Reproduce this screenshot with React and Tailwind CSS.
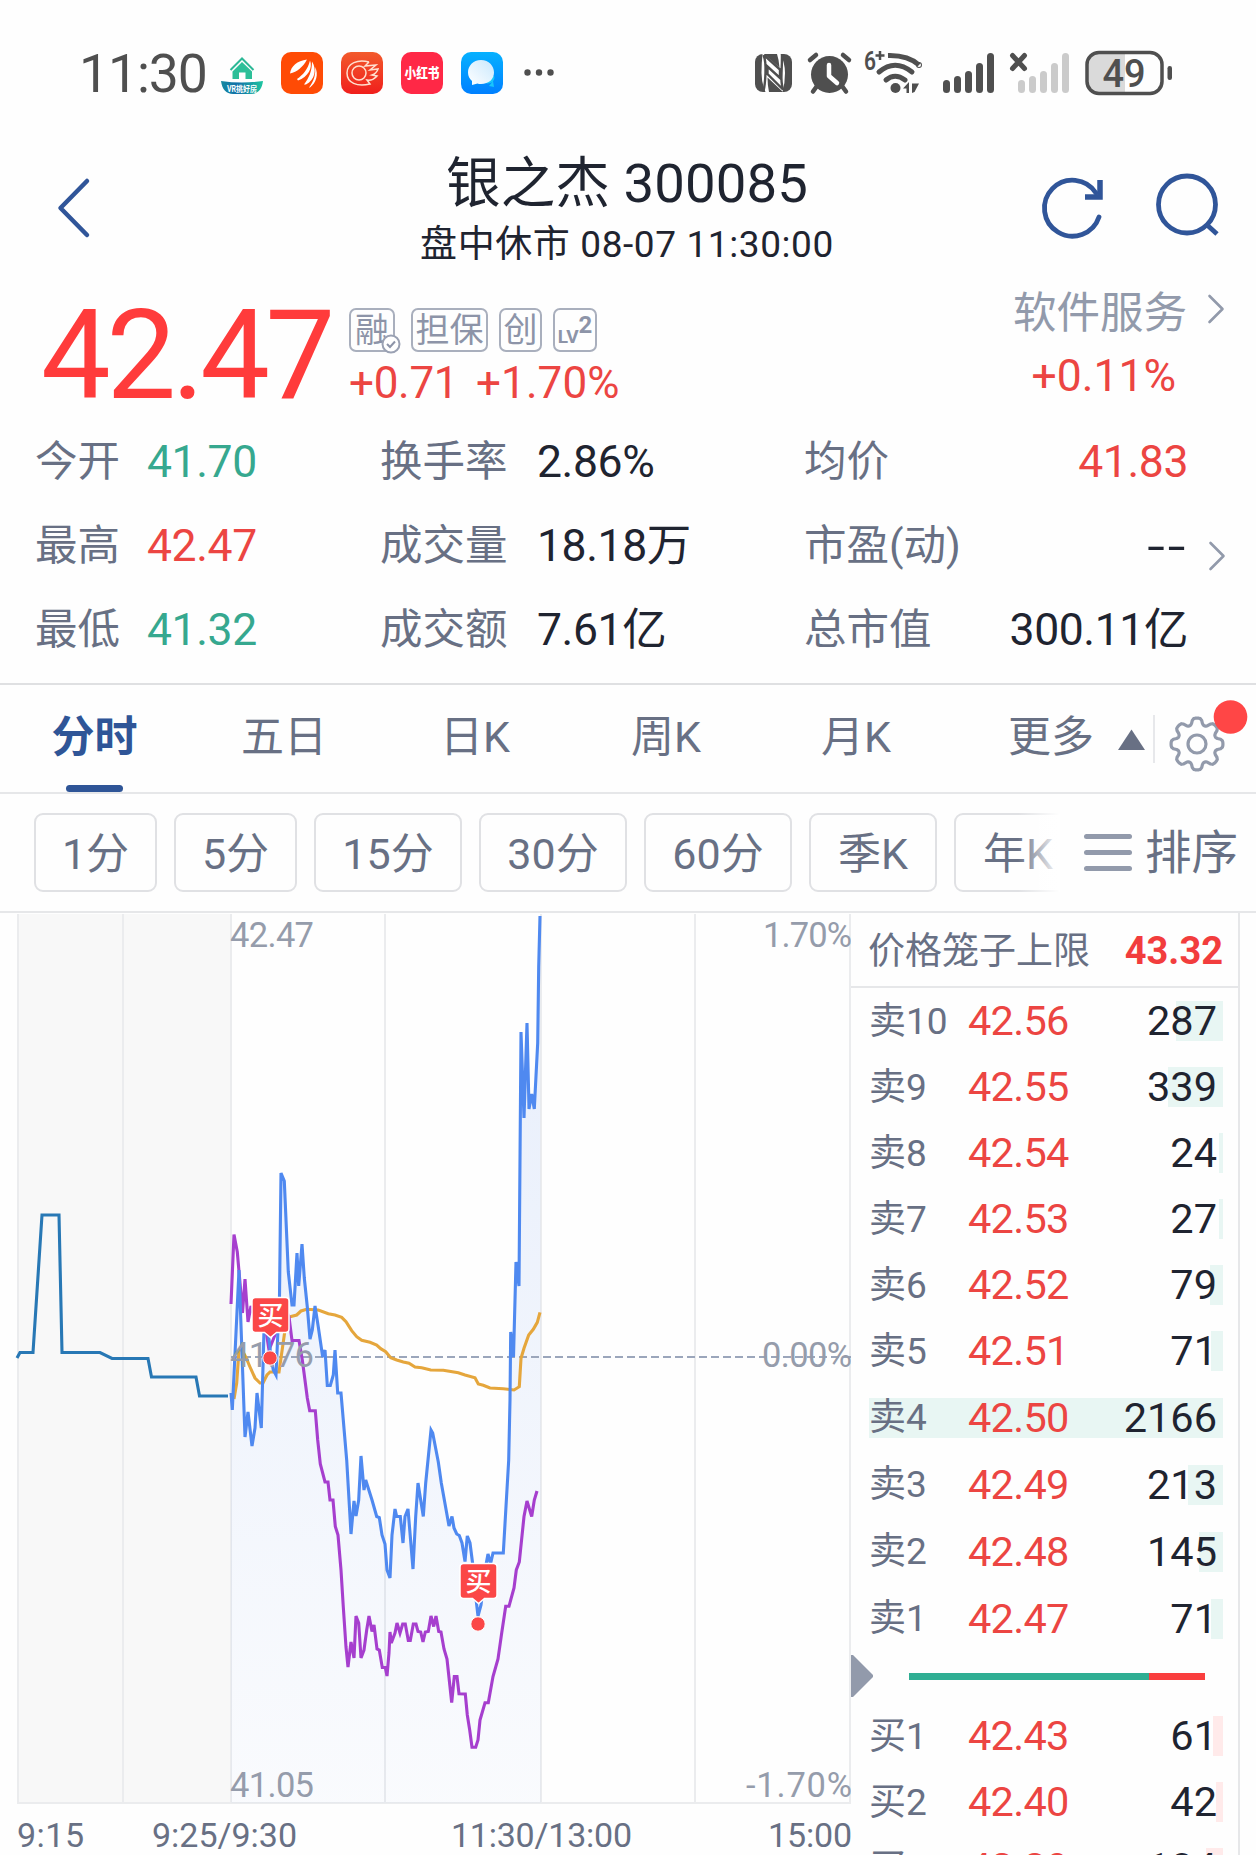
import { ChevronRight } from "lucide-react";

const LATIN = "font-['Roboto','Noto_Sans_CJK_SC',sans-serif]";

const STATS = [
    { label: '今开', value: '41.70', color: 'text-[#36a88f]' },
    { label: '换手率', value: '2.86%', color: 'text-[#1f2430]' },
    { label: '均价', value: '41.83', color: 'text-[#ec4542]' },
    { label: '最高', value: '42.47', color: 'text-[#ec4542]' },
    { label: '成交量', value: '18.18万', color: 'text-[#1f2430]' },
    { label: '市盈(动)', value: '--', color: 'text-[#1f2430] inline-block origin-right scale-x-[1.45] tracking-[2px] -mr-[3px]', more: true },
    { label: '最低', value: '41.32', color: 'text-[#36a88f]' },
    { label: '成交额', value: '7.61亿', color: 'text-[#1f2430]' },
    { label: '总市值', value: '300.11亿', color: 'text-[#1f2430]' },
];

const PERIODS = [
    { label: '1分', width: 'w-[123px]' },
    { label: '5分', width: 'w-[123px]' },
    { label: '15分', width: 'w-[148px]' },
    { label: '30分', width: 'w-[148px]' },
    { label: '60分', width: 'w-[148px]' },
    { label: '季K', width: 'w-[128px]' },
    { label: '年K', width: 'w-[128px]' },
];

const ASKS = [
    { label: '卖10', price: '42.56', amount: 287, bar: 47 },
    { label: '卖9', price: '42.55', amount: 339, bar: 55 },
    { label: '卖8', price: '42.54', amount: 24, bar: 4 },
    { label: '卖7', price: '42.53', amount: 27, bar: 4 },
    { label: '卖6', price: '42.52', amount: 79, bar: 13 },
    { label: '卖5', price: '42.51', amount: 71, bar: 12 },
    { label: '卖4', price: '42.50', amount: 2166, bar: 354, tall: true },
    { label: '卖3', price: '42.49', amount: 213, bar: 35, tall: true },
    { label: '卖2', price: '42.48', amount: 145, bar: 24, tall: true },
    { label: '卖1', price: '42.47', amount: 71, bar: 12, tall: true },
];

const BIDS = [
    { label: '买1', price: '42.43', amount: 61, bar: 10 },
    { label: '买2', price: '42.40', amount: 42, bar: 7 },
    { label: '买3', price: '42.39', amount: 104, bar: 17 },
];

const AUCTION = "17,1358 20,1352.5 33,1352.5 42,1215 59,1215 62,1352.5 100,1352.5 112,1358.5 148,1358.5 151.5,1377 196,1377 199.5,1396 228,1396";

const PRICE = "231,1393 232.3,1410 239,1270 245,1437 248,1412 252,1446 255,1428 257,1393 261.3,1428 264,1330 268,1330 271,1357 273.3,1370 276,1375 279.5,1296 281,1173 284.3,1181 288.3,1272 292,1305 294,1305 297,1253 298.7,1286 302,1244 304.3,1278 307.3,1307 310,1339 312.3,1330 315,1306 318.3,1327 322.7,1357 325,1350 327.3,1385.5 330.3,1385.5 333.3,1375 335,1350 337.7,1393 341,1393 346.7,1460 351,1534 354,1501 356,1516 358.7,1500 361,1456 364,1490 365.7,1480 372,1500 376.7,1516.5 379.3,1517.5 382,1535 385,1544 387,1570 390,1578 392,1535 395,1509 396.7,1516.5 400.3,1516.5 403,1543 405,1516.5 408,1509 413,1569 415.7,1516.5 418,1483 423.3,1516.5 425.7,1483 431,1430 432.7,1433 438.3,1462 441.3,1483 449,1526 452,1516.5 454,1528 456.7,1534 459.3,1535.5 462,1543 465,1561.5 467.3,1536 470,1543 472.7,1564 475,1590 478,1616 481,1605 485,1570 488,1554 490.5,1564 493,1553 503.3,1553 508.7,1460 510,1400 510.7,1332 513.5,1357 516,1262 519,1286 521,1032 524,1118 527,1023 529,1109 531.7,1094 534.3,1109 537.7,1043 538.7,967 540,916";

const INDEX = "231,1304 234,1234.5 237.3,1252 240,1283 242.5,1313 245,1279 248,1322 251,1306 256,1322 261,1318 266.5,1334 269,1350 275,1335 281,1320 286,1310 289,1317 292,1340.5 299,1340.5 302.3,1360 304.3,1375 307.3,1398 309.7,1410.7 315.3,1410.7 317.7,1440 320.3,1464 325,1482 328,1482 330,1500 333,1500 335.3,1526.5 338,1535 341,1570 343.3,1607 346,1647 348,1667 351,1642 354,1658 356,1616 358.7,1623 361,1658 364,1650 366.7,1630 369,1616 372,1631.5 374,1625 377,1649 379.3,1650 382.3,1667.5 385.3,1667.5 387,1676 389,1653 390,1632 391.3,1643 395,1633 397,1623 400,1633 402.7,1624 405.3,1624 408.3,1640.5 410.3,1640.5 413.3,1624 416,1624 418,1631.5 420.7,1632 423,1642 425.3,1632 428.3,1631.5 431,1616 433.7,1626.5 436,1616 438.7,1631.5 441,1632 444,1649 447,1659 451.7,1702.5 454.3,1676.5 457,1676.5 459,1693.7 465.3,1694 467.3,1715 469.7,1730 472,1747.3 475.7,1747.3 478,1740 480,1720 485,1702.7 488.3,1702.7 493,1676.5 498,1659 501.7,1633 505.7,1606.3 509,1606.3 514,1588 516.3,1570 519.3,1562 524,1516.5 527,1501 531.7,1516.5 534.3,1500 537,1491";

const AVERAGE = "234,1399 236.7,1383 239,1350 242,1350 245.7,1357 250,1367 255,1378 260,1383 263,1383 267,1375 270,1372 279,1372 285,1330 289,1317 296.7,1315 301,1311 306.7,1309.3 318.3,1310 328.3,1313.7 335,1315 341.7,1317.3 346,1321.7 351.7,1330.7 356.7,1336.7 361.7,1340.3 370,1342.3 376.7,1345 380.7,1348.7 385.7,1351.7 390.7,1357.7 396.7,1360 403.3,1362 409,1363.3 415,1367 421.7,1367.7 430.7,1370 443.3,1370.3 458.3,1372.7 465,1375 475,1377.7 478.3,1384 483.3,1385.3 490,1388 503.3,1388.7 514,1390 519.3,1386.7 521,1358.3 524,1348.3 528.7,1335 533.3,1329.3 537.3,1322.3 540,1312.3";

// eight rounded teeth around a 23px circle
const GEAR = Array.from({ length: 96 }, (_, i) => {
    const a = (i / 96) * Math.PI * 2;
    const wave = Math.tanh(1.8 * (Math.cos(8 * a) + 0.25));
    const r = 22.6 + 3.4 * wave;
    return `${(r * Math.sin(a)).toFixed(2)},${(-r * Math.cos(a)).toFixed(2)}`;
}).join(' ');

function StatusBar() {
    return (
        <div className="flex h-[120px] items-center pt-[25px] pl-[79px] text-[#4f4f4f]">
            <span className="w-[142px] pt-[3px] text-[53.5px] leading-none font-normal tracking-[-1.1px]">11:30</span>
            <svg className="h-[42px] w-[345px] shrink-0" viewBox="0 0 345 42">
                <defs>
                    <linearGradient id="boat" x1="0" x2="1" y1="0" y2="0">
                        <stop offset="0" stopColor="#1689a0" />
                        <stop offset=".4" stopColor="#1270a8" />
                        <stop offset="1" stopColor="#1fc6a0" />
                    </linearGradient>
                    <linearGradient id="coal" x1="0" x2="0" y1="0" y2="1">
                        <stop offset="0" stopColor="#f25a2c" />
                        <stop offset="1" stopColor="#f01f1c" />
                    </linearGradient>
                    <linearGradient id="chat" x1="0" x2="0" y1="0" y2="1">
                        <stop offset="0" stopColor="#06b1ff" />
                        <stop offset="1" stopColor="#0080ff" />
                    </linearGradient>
                    <linearGradient id="bubble" x1="0" x2="1" y1="1" y2="0">
                        <stop offset="0" stopColor="#ffffff" />
                        <stop offset="1" stopColor="#c9e8fd" />
                    </linearGradient>
                </defs>
                {/* house */}
                <path d="M9.500 18 21 6.500 32.500 18" fill="none" stroke="#2cb896" strokeWidth="2" />
                <path d="M21 10 31 19.500V27H24.500V20.500H18V27H11.500V19.500Z" fill="#2cbf98" />
                <path d="M0 29Q21 32 42 29C41 37 37 42 30 42H12C5 42 1 37 0 29Z" fill="url(#boat)" />
                <text x="21" y="39.500" textAnchor="middle" fontSize="8.500" fontWeight="700" fill="#fff" textLength="30" lengthAdjust="spacingAndGlyphs">VR挑好房</text>
                {/* brokerage */}
                <rect x="60" width="42" height="42" rx="10" fill="#ff4b05" />
                <path d="M69 21.500C70 14 76 9 86 7.500C82 15 76 20 69 21.500Z" fill="#fff" />
                <path d="M76 27C82 23 87 17 89 8.500C92 16 87 25 77 28.500ZM83 32.500C88 26 91 19 91 9.500C96 17 94 28 85 32.500ZM88 35.500C93 29 95 22 94 15C98 22 95 31 89 35.500Z" fill="#fff" />
                {/* comet */}
                <rect x="120" width="42" height="42" rx="10" fill="url(#coal)" />
                <g fill="none" stroke="#ffe0cf" strokeWidth="1.500">
                    <circle cx="138" cy="21" r="7" />
                    <path d="M148 10C137 7 126 11 126 21S136 35 149 32L146 28C152 29 154 26 156 24L151 23C154 22 156 20 157 17L149 18L155 13L144 14L148 10" />
                </g>
                {/* little red book */}
                <rect x="180" width="42" height="42" rx="10" fill="#ff2846" />
                <text x="201" y="26" textAnchor="middle" fontSize="14" fontWeight="900" fill="#fff" textLength="35" lengthAdjust="spacingAndGlyphs">小红书</text>
                {/* chat */}
                <rect x="240" width="42" height="42" rx="10" fill="url(#chat)" />
                <path d="M264 31C270 33 275 28 273 24L264 24ZM268 34 273 35 272 29Z" fill="#19c6fb" />
                <path d="M260 8C268 8 273 14 273 20.500S268 32 260 32C258.500 32 257.500 32 256.500 31.500L251 33V29C248.500 27 247 24 247 20.500C247 14 252 8 260 8Z" fill="url(#bubble)" />
                <circle cx="306.500" cy="20.500" r="3.200" fill="#4f4f4f" />
                <circle cx="318" cy="20.500" r="3.200" fill="#4f4f4f" />
                <circle cx="329.500" cy="20.500" r="3.200" fill="#4f4f4f" />
            </svg>
            <svg className="ml-[184px] h-[50px] w-[430px] shrink-0" viewBox="750 47 430 50">
                {/* nfc */}
                <rect x="755" y="53" width="37" height="38" rx="8" fill="#4f4f4f" />
                <path d="M762.500 53H764L779.500 66.500Q779 59 777 53H780.500Q785 62 785 72T782.500 91H783L767.500 76.500Q767.500 84 769 91H765.500Q761.500 82 761.500 72T762.500 53Z" fill="#fff" />
                <path d="M763.500 54Q766 60 765.500 72T763.500 90M764 54 780 68.500V77L767.500 65.500V73L783 88.500Q781 82 781.500 72T782 54" fill="none" stroke="#4f4f4f" strokeWidth="2.400" />
                {/* alarm */}
                <circle cx="829.500" cy="73.500" r="18.500" fill="#4f4f4f" />
                <path d="M810 59 816 54M849 59 843 54M817 85 813 90.500M842 85 846 90.500" stroke="#4f4f4f" strokeWidth="4.500" strokeLinecap="round" />
                <path d="M829 64V75L837 82" fill="none" stroke="#fff" strokeWidth="4.500" strokeLinecap="round" strokeLinejoin="round" />
                {/* wifi */}
                <text x="864" y="69" fontSize="25" fontWeight="600" fill="#4f4f4f" textLength="12" lengthAdjust="spacingAndGlyphs">6</text>
                <path d="M880 50V59M875.500 54.500H884.500" stroke="#4f4f4f" strokeWidth="2.500" />
                <g fill="none" stroke="#4f4f4f" strokeWidth="5">
                    <path d="M888 54.500Q908 54 919 64" />
                    <circle cx="919" cy="64" r=".5" />
                    <path d="M879 71Q895 57.500 912 71" strokeLinecap="round" />
                    <path d="M886 79Q895 71.500 905 79" strokeLinecap="round" />
                </g>
                <circle cx="895.500" cy="87" r="5" fill="#4f4f4f" />
                <path d="M903 87.500 909 81V92H906.500V87.500ZM912 92V82.500H919L914.500 91Z" fill="#4f4f4f" />
                {/* signal */}
                <g fill="#4f4f4f">
                    <rect x="943" y="79" width="7" height="13" rx="3.500" />
                    <rect x="954" y="75" width="7" height="17" rx="3.500" />
                    <rect x="965" y="70" width="7" height="22" rx="3.500" />
                    <rect x="976" y="62" width="7" height="30" rx="3.500" />
                    <rect x="987" y="52" width="7" height="40" rx="3.500" />
                </g>
                <path d="M1012.500 54.500 1024.500 67.500M1024.500 54.500 1012.500 67.500" stroke="#4f4f4f" strokeWidth="5" strokeLinecap="round" />
                <g fill="#cbcbcb">
                    <rect x="1018" y="79" width="7" height="13" rx="3.500" />
                    <rect x="1029" y="75" width="7" height="17" rx="3.500" />
                    <rect x="1040" y="70" width="7" height="22" rx="3.500" />
                    <rect x="1051" y="62" width="7" height="30" rx="3.500" />
                    <rect x="1062" y="52" width="7" height="40" rx="3.500" />
                </g>
                {/* battery */}
                <path d="M1125 52H1099Q1087.500 52 1087.500 63V81Q1087.500 92 1099 92H1125Z" fill="#dadada" />
                <rect x="1087" y="51.500" width="75" height="41" rx="12" fill="none" stroke="#4f4f4f" strokeWidth="3.500" />
                <rect x="1167.500" y="65" width="4.500" height="14" rx="2.200" fill="#4f4f4f" />
                <text x="1124" y="86" textAnchor="middle" fontSize="38" fontWeight="500" fill="#4f4f4f">49</text>
            </svg>
        </div>
    );
}

function Header() {
    return (
        <header className="flex h-[160px] items-start justify-between pr-[37px] pl-[50px]">
            <svg className="mt-[55px] h-[66px] w-[58px]" viewBox="50 175 58 66" fill="none" stroke="#305599" strokeWidth="4.500">
                <path d="M87 181 60.500 208 87 235" strokeLinecap="round" strokeLinejoin="round" />
            </svg>
            <div className="mr-[-111px] flex flex-col items-center pt-[31px] text-[#1f2430]">
                <h1 className="text-[54.5px] leading-[64px] font-normal tracking-[0.1px] whitespace-nowrap">银之杰 300085</h1>
                <p className="mt-[10px] text-[37px] leading-[40px] tracking-[0.6px] whitespace-nowrap">盘中休市 08-07 11:30:00</p>
            </div>
            <svg className="mt-[48px] h-[76px] w-[184px]" viewBox="1035 168 184 76" fill="none" stroke="#305599" strokeWidth="4.800">
                <path d="M1096 193A28 28 0 1 0 1099 217" strokeLinecap="round" />
                <path d="M1100 180V197H1085" strokeWidth="5.500" />
                <circle cx="1187" cy="204.500" r="28.500" />
                <path d="M1206 224 1217 234" />
            </svg>
        </header>
    );
}

function Tag({ width, children }) {
    return (
        <span className={`relative flex h-[44px] items-center justify-center rounded-[7px] border-2 border-[#a9afbd] text-[34px] leading-none text-[#8d94a8] ${width}`}>
            {children}
        </span>
    );
}

function Quote() {
    return (
        <section className="flex h-[140px] pl-[41px]">
            <div className="w-[308px] pt-[14px] text-[124px] leading-[124px] font-normal tracking-[-4.300px] text-[#ff3b3b]">42.47</div>
            <div className="w-[484px] pt-[28px]">
                <div className="flex">
                    <Tag width="w-[46px]">
                        融
                        <svg className="absolute -right-2 -bottom-1 h-[20px] w-[20px]" viewBox="0 0 20 20">
                            <circle cx="10" cy="10" r="8.500" fill="#fff" stroke="#9aa1b3" strokeWidth="2" />
                            <path d="M6 10 9 13 14 7.500" fill="none" stroke="#8d94a8" strokeWidth="2" />
                        </svg>
                    </Tag>
                    <div className="ml-[16px] flex gap-[11px]">
                        <Tag width="w-[77px]">担保</Tag>
                        <Tag width="w-[43px]">创</Tag>
                        <Tag width="w-[44px]">
                            <span className="pt-3 text-[19px] font-bold">LV</span>
                            <span className="pb-2.5 text-[24px] font-bold">2</span>
                        </Tag>
                    </div>
                </div>
                <div className="mt-[7px] flex text-[44px] leading-[48px] text-[#ec4542]">
                    <span className="w-[127px] tracking-[-0.3px]">+0.71</span>
                    <span className="tracking-[0.1px]">+1.70%</span>
                </div>
            </div>
            <div className="w-[423px]">
                <div className="flex justify-end pt-[2px]">
                    <span className="mt-[3px] text-[43.500px] leading-[58px] text-[#929aab]">软件服务</span>
                    <ChevronRight className="mt-[1px] mr-[13px] ml-[2px] h-[52px] w-[54px] text-[#929aab]" strokeWidth={1.2} />
                </div>
                <div className="pt-[9px] pr-[80px] text-right text-[44.5px] leading-[48px] text-[#ec4542]">+0.11%</div>
            </div>
        </section>
    );
}

function Stats() {
    return (
        <section className="grid h-[263px] grid-cols-[345px_424px_384px] grid-rows-[84px_84px_84px] pl-[35px]">
            {STATS.map((s, i) => (
                <div key={s.label} className="flex items-center text-[42.500px] leading-none">
                    <span className={`text-[#687084] ${i % 3 === 0 ? "w-[112px]" : i % 3 === 1 ? "w-[157px]" : ""}`}>{s.label}</span>
                    <span className={`pt-px ${s.more ? "text-[44px]" : "text-[44.5px] tracking-[-0.400px]"} ${i % 3 === 2 ? "ml-auto" : ""} ${s.color}`}>{s.value}</span>
                    {s.more && <ChevronRight className="mt-[20px] -mr-[56px] ml-[5px] h-[52px] w-[54px] text-[#929aab]" strokeWidth={1.2} />}
                </div>
            ))}
        </section>
    );
}

function Tabs() {
    return (
        <nav className="flex h-[111px] items-stretch border-t-2 border-b-2 border-t-[#dfe0e2] border-b-[#e6e7e9] text-[43px] text-[#687084]">
            <div className="flex w-[189px] flex-col items-center justify-between">
                <span className="pt-[23px] leading-[58px] font-bold text-[#2f5597]">分时</span>
                <span className="h-[7px] w-[57px] rounded-full bg-[#2f5597]" />
            </div>
            <span className="w-[190px] pt-[23px] text-center leading-[58px]">五日</span>
            <span className="w-[192px] pt-[23px] text-center leading-[58px]">日K</span>
            <span className="w-[190px] pt-[23px] text-center leading-[58px]">周K</span>
            <span className="w-[190px] pt-[23px] text-center leading-[58px]">月K</span>
            <span className="ml-[57px] pt-[23px] leading-[58px]">更多</span>
            <svg className="ml-auto h-[105px] w-[146px]" viewBox="1110 685 146 105">
                <path d="M1118 750 1131.500 729.500 1145 750Z" fill="#687084" />
                <path d="M1154 715V763" stroke="#dfe0e4" strokeWidth="1.500" />
                <g transform="translate(1197 744)" fill="none" stroke="#929aab" strokeWidth="3.200" strokeLinejoin="round">
                    <polygon points={GEAR} />
                    <circle r="9" />
                </g>
                <circle cx="1230.500" cy="717" r="16.800" fill="#ff4646" />
            </svg>
        </nav>
    );
}

function Periods() {
    return (
        <div className="flex h-[119px] items-center border-b-2 border-[#e6e7e9] pl-[34px] text-[43px] text-[#687084]">
            <div className="relative flex w-[1026px] gap-[17px] overflow-hidden">
                {PERIODS.map(p => (
                    <span key={p.label} className={`flex h-[79px] shrink-0 items-center justify-center rounded-[9px] border-2 border-[#e0e1e4] pt-[3px] ${p.width}`}>{p.label}</span>
                ))}
                <div className="absolute inset-y-0 right-0 w-[42px] bg-gradient-to-r from-white/0 to-white" />
            </div>
            <div className="ml-[24px] flex w-[48px] flex-col gap-[11px]">
                <span className="h-[5px] rounded-sm bg-[#929aab]" />
                <span className="h-[5px] rounded-sm bg-[#929aab]" />
                <span className="h-[5px] rounded-sm bg-[#929aab]" />
            </div>
            <span className="ml-[13px] pt-[3px] text-[46.5px] whitespace-nowrap">排序</span>
        </div>
    );
}

function BuyMarker({ x, y }) {
    return (
        <g transform={`translate(${x} ${y})`}>
            <path d="M-15 -60.500H15Q18.500 -60.500 18.500 -57V-29Q18.500 -25.500 15 -25.500H6L0 -20.500L-6 -25.500H-15Q-18.500 -25.500 -18.500 -29V-57Q-18.500 -60.500 -15 -60.500Z" fill="#fb4747" stroke="#fff" strokeWidth="1.500" />
            <text y="-33.500" textAnchor="middle" fontSize="26" fontWeight="500" fill="#fff">买</text>
        </g>
    );
}

function Chart() {
    return (
        <svg className="h-[942px] w-[851px] shrink-0" viewBox="0 913 851 942">
            <defs>
                <linearGradient id="area" x1="0" x2="0" y1="912" y2="1803" gradientUnits="userSpaceOnUse">
                    <stop offset="0" stopColor="#4a80e8" stopOpacity=".13" />
                    <stop offset="1" stopColor="#4a80e8" stopOpacity=".025" />
                </linearGradient>
            </defs>
            <rect x="18" y="914" width="213" height="889" fill="#f8f8f8" />
            <path d="M18 914V1803M123 914V1803M231 914V1803M385 914V1803M541 914V1803M695 914V1803M850 914V1803M17 1803H851" stroke="#ebecee" strokeWidth="2" />
            <polygon points={`${PRICE} 541,1803 231,1803`} fill="url(#area)" />
            <path d="M231 1357H851" stroke="#9ba6bb" strokeWidth="2" strokeDasharray="8 4" />
            <g fill="none" strokeWidth="3.100">
                <polyline points={AUCTION} stroke="#2878b5" />
                <polyline points={AVERAGE} stroke="#e5a63c" />
                <polyline points={INDEX} stroke="#a63fce" />
                <polyline points={PRICE} stroke="#4f89f0" />
            </g>
            <g fontSize="34.500" fill="#959cab">
                <text x="230" y="947" textLength="84">42.47</text>
                <text x="230" y="1367" textLength="84">41.76</text>
                <text x="230" y="1797" textLength="84">41.05</text>
                <text x="852" y="947" textAnchor="end" textLength="89">1.70%</text>
                <text x="852" y="1367" textAnchor="end" textLength="90">0.00%</text>
                <text x="852" y="1797" textAnchor="end" textLength="106">-1.70%</text>
            </g>
            <g fontSize="34" fill="#687084">
                <text x="17" y="1847" textLength="67">9:15</text>
                <text x="152" y="1847" textLength="145">9:25/9:30</text>
                <text x="451" y="1847" textLength="181">11:30/13:00</text>
                <text x="852" y="1847" textAnchor="end" textLength="84">15:00</text>
            </g>
            <circle cx="270" cy="1358" r="7.200" fill="#fb4747" stroke="#fff" strokeWidth="1" />
            <circle cx="478" cy="1624" r="7.200" fill="#fb4747" stroke="#fff" strokeWidth="1" />
            <BuyMarker x={270.500} y={1358} />
            <BuyMarker x={478.500} y={1624} />
        </svg>
    );
}

function BookRow({ row, tint }) {
    return (
        <div className={`relative flex shrink-0 items-center pl-[18px] ${row.tall ? "h-[67px]" : "h-[66px]"}`}>
            <div className={`absolute right-[15px] h-[40px] ${tint}`} style={{ width: row.bar }} />
            <span className="relative w-[99px] pt-px text-[37px] text-[#687084]">{row.label}</span>
            <span className="relative pt-px text-[41.5px] tracking-[-0.700px] text-[#ec4542]">{row.price}</span>
            <span className="relative mr-[21px] ml-auto pt-px text-[41.5px] text-[#1f2430]">{row.amount}</span>
        </div>
    );
}

function OrderBook() {
    return (
        <aside className="flex h-[942px] w-[389px] flex-col overflow-hidden border-r-2 border-[#e6e7e9]">
            <div className="flex h-[75px] shrink-0 items-center justify-between border-b-2 border-[#e6e7e9] pt-[4px] pr-[15px] pl-[17px]">
                <span className="text-[37px] text-[#687084]">价格笼子上限</span>
                <span className="text-[38px] font-bold text-[#f23d3d]">43.32</span>
            </div>
            {ASKS.map(r => <BookRow key={r.label} row={r} tint="bg-[#e8f6f3]" />)}
            <div className="flex h-[51px] shrink-0 items-center pb-[3px]">
                <svg className="h-[42px] w-[22px]" viewBox="0 0 22 42">
                    <path d="M0 0H2L22 20Q22 21 22 22L2 42H0Z" fill="#929aab" />
                </svg>
                <div className="ml-[36px] h-[7px] w-[240px] bg-[#2fae93]" />
                <div className="h-[7px] w-[56px] bg-[#fa3e3e]" />
            </div>
            {BIDS.map(r => <BookRow key={r.label} row={r} tint="bg-[#ffeaea]" />)}
        </aside>
    );
}

export default function App() {
    return (
        <div className={`h-[1855px] w-[1256px] overflow-hidden bg-[#fefefe] ${LATIN}`}>
            <StatusBar />
            <Header />
            <Quote />
            <Stats />
            <Tabs />
            <Periods />
            <main className="flex">
                <Chart />
                <OrderBook />
            </main>
        </div>
    );
}
